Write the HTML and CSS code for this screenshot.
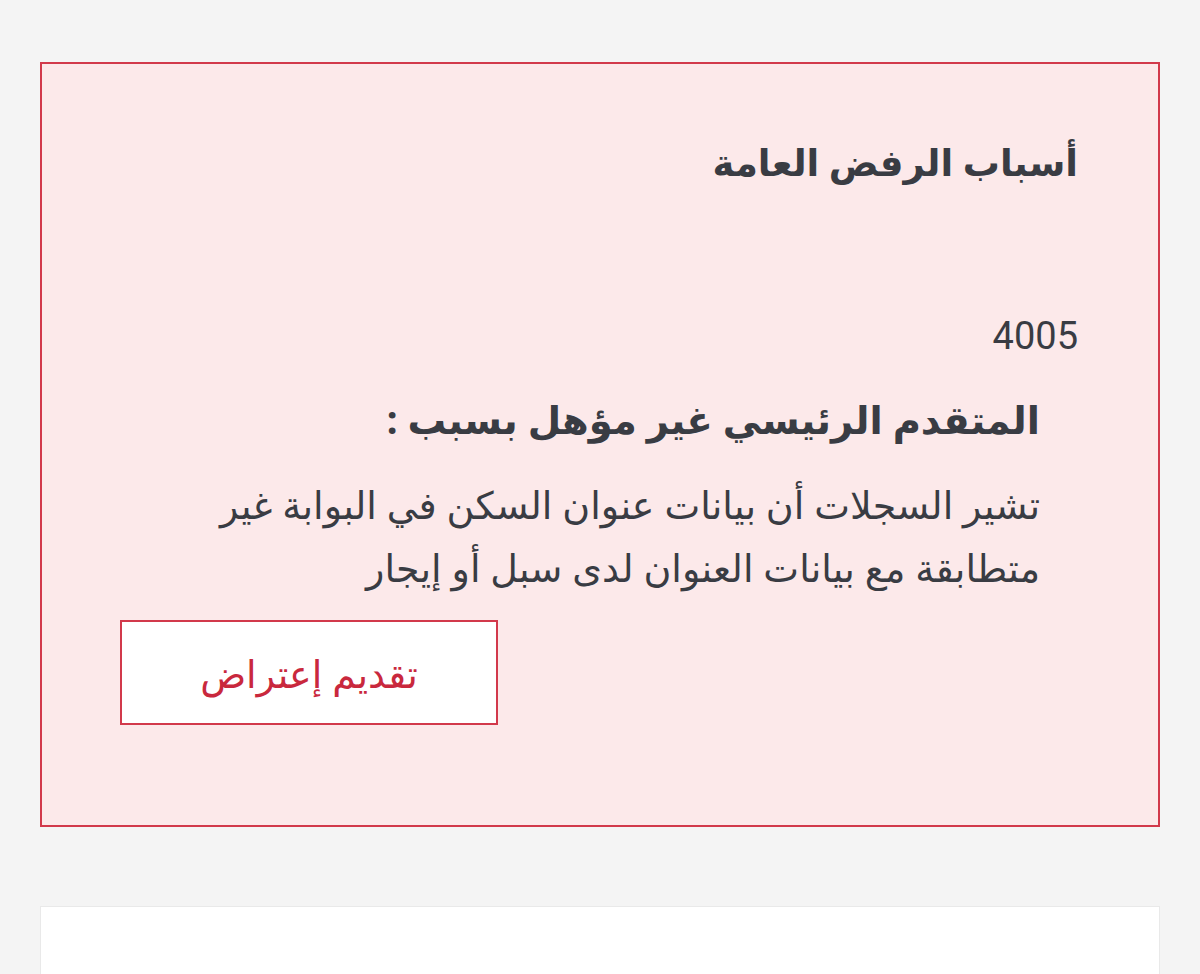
FILE: index.html
```html
<!DOCTYPE html>
<html lang="ar" dir="rtl">
<head>
<meta charset="utf-8">
<title>أسباب الرفض</title>
<link rel="stylesheet" href="styles.css">
</head>
<body>
<main class="page">
  <section class="reject-card">
    <h2 class="reject-title">أسباب الرفض العامة</h2>
    <div class="reject-code">4005</div>
    <div class="reason">
      <h3 class="reason-title">المتقدم الرئيسي غير مؤهل بسبب :</h3>
      <p class="reason-text">تشير السجلات أن بيانات عنوان السكن في البوابة غير متطابقة مع بيانات العنوان لدى سبل أو إيجار</p>
    </div>
    <div class="actions">
      <button class="btn-outline" type="button">تقديم إعتراض</button>
    </div>
  </section>
  <section class="next-card"></section>
</main>
</body>
</html>
```
FILE: styles.css
```css
html, body {
  margin: 0;
  padding: 0;
  background: #f4f4f4;
  font-family: "Noto Sans", "DejaVu Sans", sans-serif;
  color: #393c43;
}

.page {
  display: flex;
  flex-direction: column;
  gap: 79px;
  padding: 62px 40px 0;
}

.reject-card {
  background: #fce9ea;
  border: 2px solid #d2394b;
  padding: 78px 80px 100px 78px;
  display: flex;
  flex-direction: column;
}

.reject-title {
  margin: 0;
  font-size: 37px;
  line-height: 40px;
  font-weight: 700;
}

.reject-code {
  margin-top: 130px;
  font-family: Roboto, "Noto Sans", sans-serif;
  font-size: 38px;
  line-height: 48px;
  direction: ltr;
  text-align: right;
}

.reason {
  padding-right: 38px;
}

.reason-title {
  margin: 35px 0 0;
  font-size: 38.5px;
  line-height: 48px;
  font-weight: 700;
}

.reason-text {
  margin: 30px 0 0;
  font-size: 38px;
  line-height: 63px;
  max-width: 840px;
}

.actions {
  margin-top: 21px;
  display: flex;
  justify-content: flex-end;
}

.btn-outline {
  width: 378px;
  height: 105px;
  background: #ffffff;
  border: 2px solid #d2394b;
  color: #c9283d;
  font-family: inherit;
  font-size: 38px;
  cursor: pointer;
}

.next-card {
  height: 120px;
  background: #ffffff;
  border: 1px solid #e9e9e9;
}
```
